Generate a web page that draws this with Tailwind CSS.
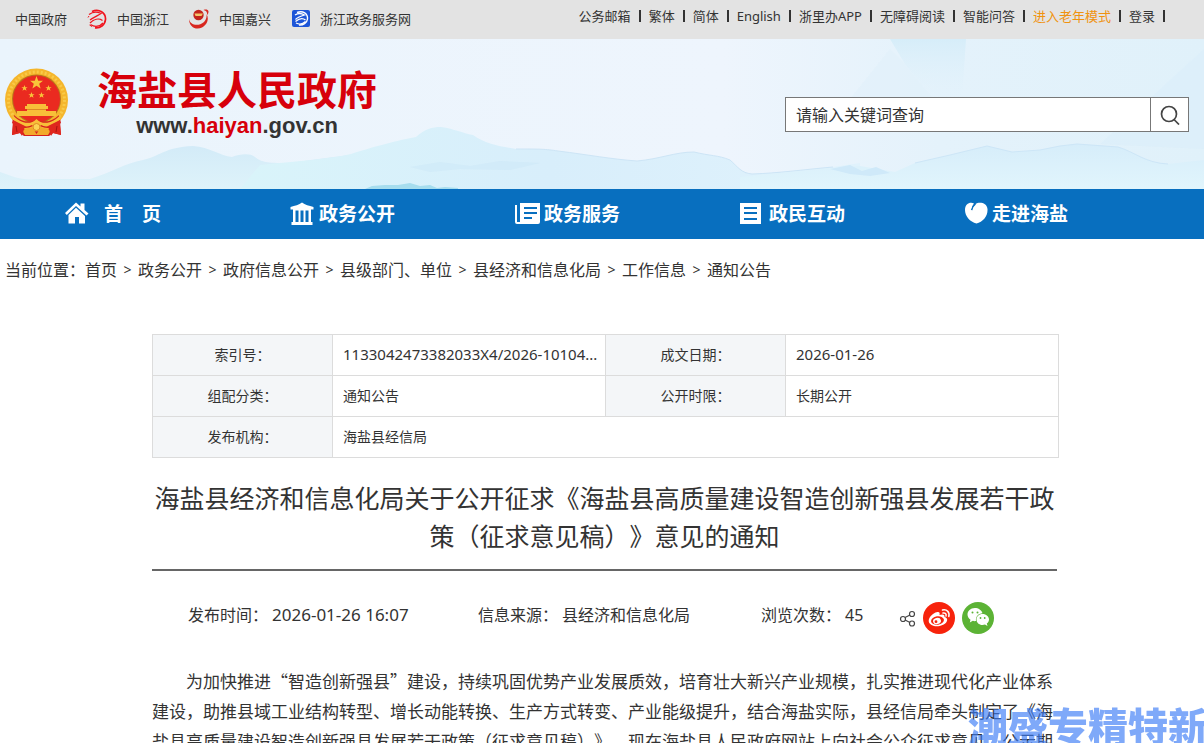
<!DOCTYPE html>
<html lang="zh-CN">
<head>
    <meta charset="UTF-8">
    <meta name="viewport" content="width=device-width, initial-scale=1.0">
    <title>海盐县人民政府 - 通知公告</title>
    <script src="https://cdn.jsdelivr.net/npm/@tailwindcss/browser@4"></script>
</head>
<body class="bg-white text-[#333] font-['Noto_Sans','Noto_Sans_CJK_SC',sans-serif] h-screen overflow-hidden [text-spacing-trim:space-all]">
    <!-- Top bar -->
    <div class="bg-[#e3e3e3] h-[39px] flex items-start justify-between text-[13px] leading-5 whitespace-nowrap">
        <div class="flex items-center gap-5 h-[38px] pl-[15px]">
            <a href="#">中国政府</a>
            <a href="#" class="flex items-center gap-[10px]">
                <svg class="w-5 h-5" viewBox="0 0 20 20" fill="none" stroke="#f0141e">
                    <path d="M5 2.5C12-1 19 4 18.500 10.500C18 16 13 19.500 8 18.800" stroke-width="1.700"/>
                    <path d="M2 5.500C6 2.500 11 3 14 4.500C11 6.500 7 8 3 11M3 14C7 10 12 9 15.500 11.500M3.500 15.500C8 18.500 13 17.500 16 14" stroke-width="1.300"/>
                    <path d="M1 8.500L2 7M2.500 16L5 17.500" stroke-width="1"/>
                </svg>
                中国浙江
            </a>
            <a href="#" class="flex items-center gap-[10px]">
                <svg class="w-5 h-5" viewBox="0 0 20 20">
                    <circle cx="9.500" cy="6" r="5.200" fill="#c4241c"/>
                    <path d="M5.500 4.500H14L12.500 7H6.500Z" fill="#f3c56a"/>
                    <path d="M0 10C1 16 9 18 15 13C17 11 18 8 17.500 5C20.500 10 18 16 13 18.500C7 21.500 0 18 0 10Z" fill="#d8271f"/>
                    <path d="M14.500 1C17 0 19 0.500 19.500 2.500C19.500 4 19 5 18 6C18.500 3.500 17.500 1.800 14.500 1Z" fill="#d8271f"/>
                </svg>
                中国嘉兴
            </a>
            <a href="#" class="flex items-center gap-[9px]">
                <svg class="w-5 h-5" viewBox="0 0 20 20" fill="none" stroke="#fff">
                    <rect x="1" y="1" width="18" height="17" rx="2" fill="#1d55d8" stroke="none"/>
                    <path d="M6 3.500C12 1 17 5 16.500 10C16 14 12 16.500 8 16" stroke-width="1.400"/>
                    <path d="M4 6C7 4 11 4.500 13.500 6C10 7 7 8 4.500 10.500M4.500 12.500C8 9.500 12 9 14.500 11M5 14C8 15.500 12 15 14.500 12.500" stroke-width="1.300"/>
                </svg>
                浙江政务服务网
            </a>
        </div>
        <div class="flex items-center gap-2 h-8 pr-[39px]">
            <a href="#">公务邮箱</a>
            <span class="w-[2px] h-3 bg-[#333]"></span>
            <a href="#">繁体</a>
            <span class="w-[2px] h-3 bg-[#333]"></span>
            <a href="#">简体</a>
            <span class="w-[2px] h-3 bg-[#333]"></span>
            <a href="#">English</a>
            <span class="w-[2px] h-3 bg-[#333]"></span>
            <a href="#">浙里办APP</a>
            <span class="w-[2px] h-3 bg-[#333]"></span>
            <a href="#">无障碍阅读</a>
            <span class="w-[2px] h-3 bg-[#333]"></span>
            <a href="#">智能问答</a>
            <span class="w-[2px] h-3 bg-[#333]"></span>
            <a href="#" class="text-[#f0920e]">进入老年模式</a>
            <span class="w-[2px] h-3 bg-[#333]"></span>
            <a href="#">登录</a>
            <span class="w-[2px] h-3 bg-[#333]"></span>
        </div>
    </div>

    <!-- Header -->
    <header class="relative h-[150px] bg-[#edf5fd] flex items-start justify-between">
        <svg class="absolute inset-0 w-full h-full" viewBox="0 0 1204 150" preserveAspectRatio="none">
            <defs>
                <linearGradient id="sky" x1="0" y1="0" x2="1" y2="0">
                    <stop offset="0" stop-color="#eaf4fc"/>
                    <stop offset="0.600" stop-color="#eef5fd"/>
                    <stop offset="0.780" stop-color="#e4f2fb"/>
                    <stop offset="1" stop-color="#e0f1fa"/>
                </linearGradient>
                <linearGradient id="hillLeft" x1="0" y1="0" x2="0" y2="1">
                    <stop offset="0" stop-color="#d3ebf8"/>
                    <stop offset="1" stop-color="#def3fa"/>
                </linearGradient>
                <linearGradient id="hillMid" x1="0" y1="0" x2="1" y2="0">
                    <stop offset="0" stop-color="#d9f4fa"/>
                    <stop offset="0.500" stop-color="#d8eefb"/>
                    <stop offset="1" stop-color="#e0f2fc"/>
                </linearGradient>
                <linearGradient id="hillRight" x1="0" y1="0" x2="0" y2="1">
                    <stop offset="0" stop-color="#d6edfa"/>
                    <stop offset="1" stop-color="#e1f5fc"/>
                </linearGradient>
                <linearGradient id="peak" x1="0" y1="0" x2="0" y2="1">
                    <stop offset="0" stop-color="#d6edf9"/>
                    <stop offset="1" stop-color="#e4f2fb" stop-opacity="0"/>
                </linearGradient>
            </defs>
            <rect width="1204" height="150" fill="url(#sky)"/>
            <path d="M890 0L905 25L940 66L962 60L966 0Z" fill="url(#peak)"/>
            <path d="M890 10L850 60L880 90L935 62L905 25Z" fill="#dfeffa" opacity="0.500"/>
            <path d="M1100 105L1204 10V110Z" fill="#d9eef9" opacity="0.500"/>
            <path d="M0 133C12 137 20 142 40 140H90C110 134 125 124 143 121C158 118 165 108 193 107C210 108 220 117 232 118C240 115 250 114 255 118C262 124 270 124 290 124C330 118 350 117 380 110V150H0Z" fill="url(#hillLeft)"/>
            <path d="M260 126C300 122 330 120 351 115C380 106 395 102 416 98C425 90 432 88 441 88C455 90 462 94 473 96C487 106 500 107 516 110C540 110 545 110 558 112C590 116 610 120 637 122C660 120 675 113 694 113C710 117 718 116 730 121C738 128 741 134 752 135C780 134 800 131 833 128L860 124V150H240Z" fill="url(#hillMid)"/>
            <path d="M516 110C540 110 545 110 558 112C590 116 610 120 637 122C660 120 675 113 694 113C710 117 718 116 730 121C738 128 741 134 752 135C780 134 800 131 833 128" fill="none" stroke="#cde5f6" stroke-width="1"/>
            <path d="M740 138C790 133 830 129 860 127L895 133L915 124L950 116L987 107L1012 113L1040 111L1060 107L1077 105L1118 108C1135 113 1145 124 1168 125L1204 121V150H740Z" fill="url(#hillRight)"/>
            <path d="M915 124L950 116L987 107L1012 113L1040 111L1060 107L1077 105L1118 108C1135 113 1145 124 1168 125" fill="none" stroke="#cde6f7" stroke-width="1"/>
            <path d="M830 130L850 126L862 132L876 128L890 134L870 137L850 135Z" fill="#cfe9f9"/>
            <path d="M410 128L440 123L470 127L500 122L540 124L510 131L460 130L430 133Z" fill="#cbe8f8" opacity="0.500"/>
            <path d="M365 150L372 147L385 146L398 146L410 144L420 147L430 146L437 149L445 148L458 149V150Z" fill="#a6ddee"/>
        </svg>
        <a href="#" class="relative flex items-start pl-[5px] pt-[29px]">
            <svg class="w-[64px] h-[69px]" viewBox="0 0 64 69">
                <path d="M9 48L7 67L15 65L19 68H44L48 65L56 67L54 48Z" fill="#d5211d"/>
                <circle cx="31.500" cy="32" r="31.500" fill="#f5b62c"/>
                <circle cx="31.500" cy="32" r="28" fill="none" stroke="#fbd354" stroke-width="3" stroke-dasharray="2 2" opacity="0.700"/>
                <circle cx="31.500" cy="31" r="24.500" fill="#b9761b"/>
                <circle cx="31.500" cy="31" r="23.500" fill="#ea2a20"/>
                <path d="M31.500 8L33.200 12.800H38L34.200 15.800L35.600 20.500L31.500 17.700L27.400 20.500L28.800 15.800L25 12.800H29.800Z" fill="#f8c53a"/>
                <path id="star" d="M19.500 17L20.300 19.200H22.600L20.800 20.600L21.500 22.800L19.500 21.500L17.500 22.800L18.200 20.600L16.400 19.200H18.700Z" fill="#f8c53a"/>
                <use href="#star" x="24"/>
                <use href="#star" x="7" y="7"/>
                <use href="#star" x="17" y="7"/>
                <path d="M22 36H41V38H43V41H41V43H51V48H12V43H22V41H20V38H22Z" fill="#f8bf39"/>
                <path d="M22 41.500H41" stroke="#dd8a25" stroke-width="1"/>
                <path d="M9 47C16 54 24 55 31.500 52C39 55 47 54 54 47L56 55C49 61 40 61 35 58H28C23 61 14 61 7 55Z" fill="#d5211d"/>
                <path d="M7 46C14 55 25 58 31.500 51C38 58 49 55 56 46L55 52C48 58 41 60 36 57L31.500 62L27 57C22 60 15 58 8 52Z" fill="#f8bf39"/>
                <path d="M17 62L27 59L31.500 66L36 59L46 62L43 67H20Z" fill="#f2aa2a"/>
                <circle cx="31.500" cy="59" r="3.500" fill="#fbd354" stroke="#e08a25"/>
                <path d="M8 52L7 67L15 65L17 68L20 58ZM55 52L56 67L48 65L46 68L43 58Z" fill="#df271e"/>
                <path d="M11 58L12 64M52 58L51 64" stroke="#a9140f"/>
            </svg>
            <span class="flex flex-col items-center pl-7">
                <span class="text-[40px] leading-[44px] font-bold text-[#d7000b]">海盐县人民政府</span>
                <span class="font-['Liberation_Sans',sans-serif] text-[22px] leading-7 font-bold">www.<span class="text-[#d7000b]">haiyan</span>.gov.cn</span>
            </span>
        </a>
        <form class="relative flex mt-[58px] mr-[15px] h-[35px]">
            <input type="text" aria-label="搜索" placeholder="请输入关键词查询" class="w-[365px] bg-white border border-[#777] border-r-0 px-[10px] text-base placeholder:text-[#333]">
            <button type="submit" aria-label="查询" class="w-[39px] bg-white border border-[#777] flex items-center justify-center">
                <svg class="w-5 h-5" viewBox="0 0 20 20" fill="none" stroke="#444" stroke-width="1.700">
                    <circle cx="9" cy="9" r="7.500"/>
                    <path d="M14 14.500L19 19.500"/>
                </svg>
            </button>
        </form>
    </header>

    <!-- Main nav -->
    <nav class="bg-[#086fbf] h-[50px] pl-[65px] pr-[14px] grid grid-cols-5 items-center text-white text-[19px] font-bold whitespace-nowrap">
        <a href="#" class="flex items-center gap-[15px]">
            <svg class="w-6 h-6" viewBox="0 0 24 24" fill="#fff">
                <path d="M0 11L11 0.500L15.500 4.500V1.500H19.500V8L23.500 11.500L21.500 13.500L11 4L1.800 13Z"/>
                <path d="M11 5.800L20 14V21.500H14V15H10V21.500H3.500V13Z"/>
            </svg>
            首　页
        </a>
        <a href="#" class="flex items-center gap-[5px]">
            <svg class="w-6 h-6" viewBox="0 0 24 24" fill="#fff">
                <path d="M12 0.500C15 3 19 3.500 23.500 5V7.500H21V20H22.500V23H1.500V20H3V7.500H0.500V5C5 3.500 9 3 12 0.500Z"/>
                <path d="M5.500 8.500H8.500V20H5.500ZM10.500 8.500H13.500V20H10.500ZM15.500 8.500H18.500V20H15.500Z" fill="#086fbf"/>
            </svg>
            政务公开
        </a>
        <a href="#" class="flex items-center gap-1">
            <svg class="w-[25px] h-6" viewBox="0 0 25 24" fill="#fff">
                <path d="M0 3H2V20H4V22H2Q0 22 0 20Z"/>
                <path fill-rule="evenodd" d="M5 1H25V20Q25 22 23 22H4V20H5ZM9 5V7H22V5ZM9 10V12H22V10ZM9 15V17H17V15Z"/>
            </svg>
            政务服务
        </a>
        <a href="#" class="flex items-center gap-2">
            <svg class="w-[21px] h-6" viewBox="0 0 21 24" fill="#fff">
                <path fill-rule="evenodd" d="M0 1H21V22H0ZM4 5V7H17V5ZM4 10V12H17V10ZM4 16V18H17V16Z"/>
            </svg>
            政民互动
        </a>
        <a href="#" class="flex items-center gap-1">
            <svg class="w-[23px] h-6" viewBox="0 0 23 24" fill="#fff">
                <path d="M9 1.500C5 -0.500 0 2 0 8C0 14 5 20 11.500 21.500C18 20 23 14 22.500 7C22 0.500 14 -0.500 10.500 2C8.500 4 7.500 6.500 7 9C6.500 6 7 4 9 1.500Z"/>
                <path d="M6.500 8C7 5 8.500 3.500 10.500 2" fill="none" stroke="#086fbf" stroke-width="1.300"/>
            </svg>
            走进海盐
        </a>
    </nav>

    <!-- Breadcrumb -->
    <div class="flex pl-[5px] pt-[19px] text-base leading-6 whitespace-nowrap">
        <span>当前位置：</span>
        <a href="#">首页</a>
        <span class="w-[21px] text-center text-sm leading-6">&gt;</span>
        <a href="#">政务公开</a>
        <span class="w-[21px] text-center text-sm leading-6">&gt;</span>
        <a href="#">政府信息公开</a>
        <span class="w-[21px] text-center text-sm leading-6">&gt;</span>
        <a href="#">县级部门、单位</a>
        <span class="w-[21px] text-center text-sm leading-6">&gt;</span>
        <a href="#">县经济和信息化局</a>
        <span class="w-[21px] text-center text-sm leading-6">&gt;</span>
        <a href="#">工作信息</a>
        <span class="w-[21px] text-center text-sm leading-6">&gt;</span>
        <a href="#">通知公告</a>
    </div>

    <!-- Article -->
    <main class="pl-[152px] pr-[145px] pt-[52px]">
        <table class="w-full table-fixed border-collapse text-sm">
            <colgroup>
                <col class="w-[180px]">
                <col>
                <col class="w-[180px]">
                <col>
            </colgroup>
            <tbody>
                <tr class="h-[41px]">
                    <th class="border border-[#dcdcdc] bg-[#f4f6f8] font-normal">索引号：</th>
                    <td class="border border-[#dcdcdc] pl-[10px] text-[15px] whitespace-nowrap">1133042473382033X4/2026-10104...</td>
                    <th class="border border-[#dcdcdc] bg-[#f4f6f8] font-normal">成文日期：</th>
                    <td class="border border-[#dcdcdc] pl-[10px] text-[15px]">2026-01-26</td>
                </tr>
                <tr class="h-[41px]">
                    <th class="border border-[#dcdcdc] bg-[#f4f6f8] font-normal">组配分类：</th>
                    <td class="border border-[#dcdcdc] pl-[10px]">通知公告</td>
                    <th class="border border-[#dcdcdc] bg-[#f4f6f8] font-normal">公开时限：</th>
                    <td class="border border-[#dcdcdc] pl-[10px]">长期公开</td>
                </tr>
                <tr class="h-[41px]">
                    <th class="border border-[#dcdcdc] bg-[#f4f6f8] font-normal">发布机构：</th>
                    <td colspan="3" class="border border-[#dcdcdc] pl-[10px]">海盐县经信局</td>
                </tr>
            </tbody>
        </table>

        <h1 class="mt-[21px] pb-[14px] mr-[2px] border-b-2 border-[#666] text-center text-[25px] leading-[38px]">海盐县经济和信息化局关于公开征求《海盐县高质量建设智造创新强县发展若干政策（征求意见稿）》意见的通知</h1>

        <div class="mt-[31px] pl-9 flex items-start text-base leading-[26px] whitespace-nowrap">
            <div class="w-[290px] flex gap-1"><span>发布时间：</span><span class="text-[17px]">2026-01-26 16:07</span></div>
            <div class="w-[283px] flex gap-1"><span>信息来源：</span><span>县经济和信息化局</span></div>
            <div class="w-[138px] flex gap-1"><span>浏览次数：</span><span>45</span></div>
            <div class="flex items-center gap-[7px]">
                <button type="button" aria-label="分享">
                    <svg class="w-[17px] h-8" viewBox="0 0 17 32" fill="none" stroke="#444" stroke-width="1.200">
                        <circle cx="4" cy="17" r="2.500"/>
                        <circle cx="13" cy="12" r="2.500"/>
                        <circle cx="13" cy="21.500" r="2.500"/>
                        <path d="M6 15.500L11 13M6 18L11 20.500"/>
                    </svg>
                </button>
                <a href="#" aria-label="微博">
                    <svg class="w-8 h-8" viewBox="0 0 32 32">
                        <circle cx="16" cy="16" r="16" fill="#f7230c"/>
                        <path d="M15 10C16.500 10 17 11 16.500 13C19 12 22 12 21.500 15C24 15.500 25 17.500 23.500 20C21 24 13 25.500 8.500 23C3.500 20 6 15 10 12C12 10.500 13.500 9.800 15 10Z" fill="#fff"/>
                        <ellipse cx="14.500" cy="18.500" rx="6.500" ry="4.200" fill="#f7230c" transform="rotate(-8 14.500 18.500)"/>
                        <ellipse cx="14" cy="19" rx="4" ry="3.200" fill="#fff" transform="rotate(-15 14 19)"/>
                        <circle cx="13" cy="19.700" r="1.400" fill="#f7230c"/>
                        <path d="M19.500 8C24 7 27 10.500 25.800 14.500M20 11C22 10.500 23.700 12 23 14" fill="none" stroke="#fff" stroke-width="1.500" stroke-linecap="round"/>
                    </svg>
                </a>
                <a href="#" aria-label="微信">
                    <svg class="w-8 h-8" viewBox="0 0 32 32">
                        <circle cx="16" cy="16" r="16" fill="#5cb335"/>
                        <path d="M12.800 6C8.500 6 5.500 9 5.500 12.500C5.500 14.800 6.800 16.500 8.500 17.800L7.800 20.500L10.800 18.800C12 19.200 13 19.200 14 19C13.500 14.500 16.500 11.500 20.500 11.300C19.500 8 16.500 6 12.800 6Z" fill="#fff"/>
                        <path d="M20.500 12C16.800 12 14.500 14.500 14.500 17.500C14.500 20.500 17 23 20.500 23C21.500 23 22.200 22.800 23 22.500L25.500 24L24.800 21.500C26.200 20.500 27 19 27 17.500C27 14.500 24.200 12 20.500 12Z" fill="#fff"/>
                        <g fill="#5cb335">
                            <circle cx="10.500" cy="10.500" r="1"/>
                            <circle cx="15.500" cy="10.500" r="1"/>
                            <circle cx="18.500" cy="16" r="0.900"/>
                            <circle cx="22.700" cy="16" r="0.900"/>
                        </g>
                    </svg>
                </a>
            </div>
        </div>

        <p class="mt-8 indent-[34px] text-[17px] leading-[30px] font-['Noto_Sans_CJK_SC',sans-serif]">为加快推进“智造创新强县”建设，持续巩固优势产业发展质效，培育壮大新兴产业规模，扎实推进现代化产业体系建设，助推县域工业结构转型、增长动能转换、生产方式转变、产业能级提升，结合海盐实际，县经信局牵头制定了《海盐县高质量建设智造创新强县发展若干政策（征求意见稿）》，现在海盐县人民政府网站上向社会公众征求意见，公示期</p>
    </main>

    <!-- Watermark -->
    <div class="fixed -right-1 -bottom-3 text-[40px] leading-[60px] font-black text-[#3b7bf6]/65 whitespace-nowrap pointer-events-none font-['Noto_Sans_CJK_SC',sans-serif]">潮盛专精特新</div>
</body>
</html>
